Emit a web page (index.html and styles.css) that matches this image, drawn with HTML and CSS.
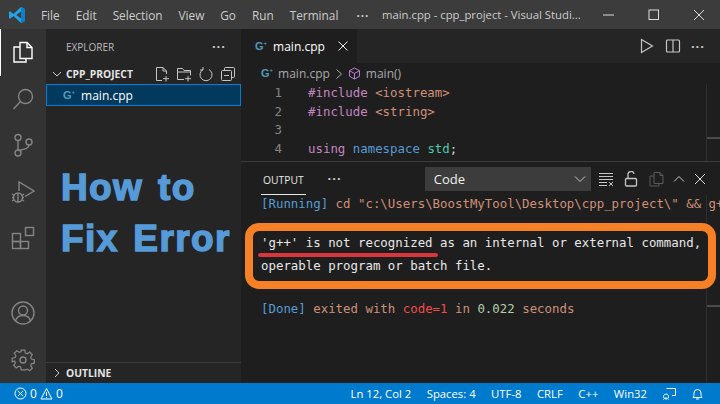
FILE: index.html
```html
<!DOCTYPE html>
<html lang="en">
<head>
    <meta charset="UTF-8">
    <meta name="viewport" content="width=device-width, initial-scale=1.0">
    <title>main.cpp - cpp_project - Visual Studio Code</title>
    <link rel="stylesheet" href="styles.css">
</head>
<body>
    <div class="window">
        <header class="titlebar">
            <svg class="logo" width="18" height="18" viewBox="0 0 18 18">
                <path d="M13 1l4 2v12l-4 2L5.500 10 2 12.800 1 12V6l1-.800L5.500 8z" fill="#23a3e8"/>
                <path d="M13 1l4 2v12l-4 2z" fill="#0e7fc8"/>
                <path d="M13 5.500L8.200 9 13 12.500z" fill="#3c3c3c"/>
            </svg>
            <nav class="menu">
                <span>File</span><span>Edit</span><span>Selection</span><span>View</span><span>Go</span><span>Run</span><span>Terminal</span><span class="menu-more">···</span>
            </nav>
            <div class="window-title">main.cpp - cpp_project - Visual Studi...</div>
            <div class="window-controls">
                <svg width="12" height="12" viewBox="0 0 12 12"><path d="M0 6h11" stroke="#ddd" fill="none"/></svg>
                <svg width="12" height="12" viewBox="0 0 12 12"><rect x="1" y="1" width="9.500" height="9.500" stroke="#ddd" fill="none"/></svg>
                <svg width="12" height="12" viewBox="0 0 12 12"><path d="M1 1l10 10M11 1L1 11" stroke="#ddd" fill="none"/></svg>
            </div>
        </header>

        <div class="workbench">
            <aside class="activitybar">
                <div class="activity-top">
                    <div class="activity-item active">
                        <svg width="24" height="24" viewBox="0 0 24 24" fill="none" stroke="#fff" stroke-width="1.400"><path d="M9 2.500h7l5 5v11H9z"/><path d="M16 2.500v5h5"/><path d="M9 7H3v15h12v-3.500"/></svg>
                    </div>
                    <div class="activity-item">
                        <svg width="24" height="24" viewBox="0 0 24 24" fill="none" stroke="#858585" stroke-width="1.400"><circle cx="14.500" cy="9.500" r="7"/><path d="M9.500 14.500L2.500 22"/></svg>
                    </div>
                    <div class="activity-item">
                        <svg width="24" height="24" viewBox="0 0 24 24" fill="none" stroke="#858585" stroke-width="1.400"><circle cx="7" cy="4.500" r="3"/><circle cx="7" cy="20" r="3"/><circle cx="18" cy="9" r="3"/><path d="M7 7.500V17M18 12c0 3-3 4-11 5.500"/></svg>
                    </div>
                    <div class="activity-item">
                        <svg width="24" height="24" viewBox="0 0 24 24" fill="none" stroke="#858585" stroke-width="1.400"><path d="M8 11V2l15 9-9 5.500"/><circle cx="7" cy="17.500" r="4.500"/><path d="M7 13v9M1 14l2.500 1.500M1 21l2.500-1.500M13 14l-2.500 1.500M13 21l-2.500-1.500M1 17.500h2M11 17.500h2"/></svg>
                    </div>
                    <div class="activity-item">
                        <svg width="24" height="24" viewBox="0 0 24 24" fill="none" stroke="#858585" stroke-width="1.400"><rect x="1.500" y="7.500" width="8" height="8"/><rect x="1.500" y="15.500" width="8" height="7"/><rect x="9.500" y="15.500" width="8" height="7"/><rect x="14.500" y="1.500" width="8" height="8"/></svg>
                    </div>
                </div>
                <div class="activity-bottom">
                    <div class="activity-item">
                        <svg width="24" height="24" viewBox="0 0 24 24" fill="none" stroke="#858585" stroke-width="1.400"><circle cx="12" cy="12" r="11"/><circle cx="12" cy="9.500" r="4.500"/><path d="M4.500 20c1-4 4-5.500 7.500-5.500s6.500 1.500 7.500 5.500"/></svg>
                    </div>
                    <div class="activity-item">
                        <svg width="24" height="24" viewBox="0 0 24 24" fill="none" stroke="#858585" stroke-width="1.400"><circle cx="12" cy="12" r="3"/><path d="M10 1h4l.700 3.300 2 .800 2.800-1.800 2.800 2.800-1.800 2.800.800 2 3.300.700v4l-3.300.700-.800 2 1.800 2.800-2.800 2.800-2.800-1.800-2 .800L14 23h-4l-.700-3.300-2-.800-2.800 1.800-2.800-2.800 1.800-2.800-.800-2L0 14v-4l3.300-.700.800-2-1.800-2.800 2.800-2.800 2.800 1.800 2-.800z" transform="translate(1.200 1.200) scale(.9)"/></svg>
                    </div>
                </div>
            </aside>

            <aside class="sidebar">
                <div class="sidebar-title">
                    <span>EXPLORER</span>
                    <span class="dots">···</span>
                </div>
                <div class="section-head">
                    <svg width="10" height="10" viewBox="0 0 10 10"><path d="M1 3l4 4 4-4" stroke="#ccc" fill="none"/></svg>
                    <span class="section-name">CPP_PROJECT</span>
                    <div class="section-actions">
                        <svg width="16" height="16" viewBox="0 0 16 16" fill="none" stroke="#c5c5c5"><path d="M8 14.500H2.500v-13H9l3.500 3.500v3M9 1.500V5h3.500M12 10v5.500M9 12.700h6"/></svg>
                        <svg width="16" height="16" viewBox="0 0 16 16" fill="none" stroke="#c5c5c5"><path d="M8 13.500H1.500v-11h5l1.500 2h6.500v5M1.500 6h13M12 10v5.500M9 12.700h6"/></svg>
                        <svg width="16" height="16" viewBox="0 0 16 16" fill="none" stroke="#c5c5c5"><path d="M5 3.500a6 6 0 1 0 6 0M5 1v3H2"/></svg>
                        <svg width="16" height="16" viewBox="0 0 16 16" fill="none" stroke="#c5c5c5"><rect x="1.500" y="4.500" width="10" height="10" rx="1"/><path d="M4.500 4.500v-2a1 1 0 0 1 1-1h8a1 1 0 0 1 1 1v8a1 1 0 0 1-1 1h-2M4 9.500h5"/></svg>
                    </div>
                </div>
                <div class="file-row">
                    <span class="cpp-icon">G<sup>+</sup></span>
                    <span>main.cpp</span>
                </div>
                <div class="thumb-text">How to<br>Fix Error</div>
                <div class="outline-head">
                    <svg width="10" height="10" viewBox="0 0 10 10"><path d="M3 1l4 4-4 4" stroke="#ccc" fill="none"/></svg>
                    <span class="section-name">OUTLINE</span>
                </div>
            </aside>

            <main class="main">
                <div class="tabbar">
                    <div class="tab">
                        <span class="cpp-icon">G<sup>+</sup></span>
                        <span class="tab-name">main.cpp</span>
                        <svg width="10" height="10" viewBox="0 0 10 10"><path d="M.5.500l9 9M9.500.500l-9 9" stroke="#eee" fill="none"/></svg>
                    </div>
                    <div class="tab-actions">
                        <svg width="16" height="16" viewBox="0 0 16 16" fill="none" stroke="#c5c5c5" stroke-width="1.200"><path d="M2.500 1.500l11 6.500-11 6.500z"/></svg>
                        <svg width="16" height="16" viewBox="0 0 16 16" fill="none" stroke="#c5c5c5" stroke-width="1.200"><rect x="1.500" y="2" width="13" height="12" rx="1"/><path d="M8 2v12"/></svg>
                        <span class="dots">···</span>
                    </div>
                </div>
                <div class="breadcrumbs">
                    <span class="cpp-icon">G<sup>+</sup></span>
                    <span>main.cpp</span>
                    <svg width="8" height="10" viewBox="0 0 8 10"><path d="M1.500 .5l5 4.500-5 4.500" stroke="#aaa" fill="none"/></svg>
                    <svg width="13" height="13" viewBox="0 0 13 13" fill="none" stroke="#b180d7"><path d="M6.500 1l5 2.700v5.600l-5 2.700-5-2.700V3.700zM1.500 3.700l5 2.800 5-2.800M6.500 6.500V12"/></svg>
                    <span>main()</span>
                </div>
                <div class="editor">
                    <div class="code">
                        <div class="code-line"><span class="line-no">1</span><span><span class="kw-pink">#include</span> <span class="str">&lt;iostream&gt;</span></span></div>
                        <div class="code-line"><span class="line-no">2</span><span><span class="kw-pink">#include</span> <span class="str">&lt;string&gt;</span></span></div>
                        <div class="code-line"><span class="line-no">3</span></div>
                        <div class="code-line"><span class="line-no">4</span><span><span class="kw-pink">using</span> <span class="kw-blue">namespace</span> <span class="ns">std</span>;</span></div>
                    </div>
                    <div class="ruler ruler-editor"><div class="ruler-mark"></div></div>
                </div>
                <section class="panel">
                    <div class="panel-head">
                        <span class="panel-tab">OUTPUT</span>
                        <span class="dots">···</span>
                        <div class="channel">
                            <span>Code</span>
                            <svg width="12" height="12" viewBox="0 0 12 12"><path d="M1 3.500l5 5 5-5" stroke="#ccc" fill="none"/></svg>
                        </div>
                        <div class="panel-actions">
                            <svg width="16" height="16" viewBox="0 0 16 16" fill="none" stroke="#c5c5c5"><path d="M1 2.500h14M1 5.500h14M1 8.500h14M1 11.500h8M1 14.500h8M11 11l4 4M15 11l-4 4"/></svg>
                            <svg width="16" height="16" viewBox="0 0 16 16" fill="none" stroke="#c5c5c5" stroke-width="1.300"><rect x="2.500" y="7.500" width="11" height="7.500" rx="1"/><path d="M5 7.500V4a3 3 0 0 1 6-1"/></svg>
                            <svg width="16" height="16" viewBox="0 0 16 16" fill="none" stroke="#5a5a5a"><path d="M6 1.500h6l3 3v8H6zM12 1.500v3h3M6 5H2v10h9v-2.500"/></svg>
                            <svg width="12" height="12" viewBox="0 0 12 12"><path d="M1 8.500l5-5 5 5" stroke="#ccc" fill="none"/></svg>
                            <svg width="12" height="12" viewBox="0 0 12 12"><path d="M1 1l10 10M11 1L1 11" stroke="#ddd" fill="none"/></svg>
                        </div>
                    </div>
                    <div class="output">
                        <div class="ruler ruler-output"><div class="ruler-mark"></div></div>
                        <div class="out-line"><span class="log-tag">[Running]</span> <span class="log-cmd">cd "c:\Users\BoostMyTool\Desktop\cpp_project\" &amp;&amp; g+</span></div>
                        <div class="error-box">
                            <div class="out-line err-first">'g++' is not recognized as an internal or external command,</div>
                            <div class="out-line">operable program or batch file.</div>
                        </div>
                        <div class="out-line"><span class="log-tag">[Done]</span> <span class="log-cmd">exited with</span> <span class="log-code">code=1</span> <span class="log-cmd">in</span> <span class="log-num">0.022</span> <span class="log-cmd">seconds</span></div>
                    </div>
                </section>
            </main>
        </div>

        <footer class="statusbar">
            <div class="status-left">
                <svg width="13" height="13" viewBox="0 0 13 13" fill="none" stroke="#fff"><circle cx="6.500" cy="6.500" r="5.500"/><path d="M4 4l5 5M9 4l-5 5"/></svg>
                <span>0</span>
                <svg width="13" height="13" viewBox="0 0 13 13" fill="none" stroke="#fff"><path d="M6.500 1.500l5.500 10.500H1zM6.500 5v4M6.500 10v1"/></svg>
                <span>0</span>
            </div>
            <div class="status-right">
                <span>Ln 12, Col 2</span>
                <span>Spaces: 4</span>
                <span>UTF-8</span>
                <span>CRLF</span>
                <span>C++</span>
                <span>Win32</span>
                <svg width="13" height="13" viewBox="0 0 13 13" fill="none" stroke="#fff"><path d="M3.500 1.500h9v7H9M3 7a2.500 2.500 0 1 0 .1 0zM.5 12.500c.5-2 4.500-2 5 0"/></svg>
                <svg width="13" height="13" viewBox="0 0 13 13" fill="none" stroke="#fff"><path d="M2 10.500c1-1 1-2 1-4.500a3.500 3.500 0 0 1 7 0c0 2.500 0 3.500 1 4.500zM5 12h3"/></svg>
            </div>
        </footer>
    </div>
</body>
</html>
```

FILE: styles.css
```css
* {
    box-sizing: border-box;
}
html, body {
    margin: 0;
    padding: 0;
    background: #1e1e1e;
}
.window {
    width: 720px;
    height: 404px;
    display: flex;
    flex-direction: column;
    overflow: hidden;
    font-family: "Open Sans", "Noto Sans", sans-serif;
    color: #ccc;
}
svg {
    flex: none;
    display: block;
}
.dots {
    font-size: 13px;
    font-weight: bold;
    letter-spacing: 1px;
    line-height: 1;
    color: #ccc;
}

/* title bar */
.titlebar {
    height: 29px;
    flex: none;
    background: #3c3c3c;
    display: flex;
    align-items: center;
    padding-left: 8px;
    font-size: 11.800px;
}
.menu {
    display: flex;
    gap: 16px;
    margin-left: 15px;
    width: 341px;
}
.menu-more {
    margin-left: 2px;
    font-weight: bold;
    letter-spacing: 1px;
}
.window-title {
    width: 204px;
    font-size: 11.300px;
    white-space: nowrap;
}
.window-controls {
    margin-left: 17px;
    display: flex;
    gap: 33px;
}

/* left side */
.workbench {
    flex: 1;
    display: flex;
    min-height: 0;
}
.activitybar {
    width: 46px;
    flex: none;
    background: #333;
    display: flex;
    flex-direction: column;
    justify-content: space-between;
}
.activity-item {
    height: 46.500px;
    display: flex;
    align-items: center;
    justify-content: center;
    padding-right: 1px;
}
.activity-item.active {
    border-left: 1px solid #fff;
}
.sidebar {
    width: 195px;
    flex: none;
    background: #252526;
    display: flex;
    flex-direction: column;
}
.sidebar-title {
    height: 35px;
    display: flex;
    align-items: center;
    justify-content: space-between;
    padding: 0 15px 0 20px;
    font-size: 10px;
    color: #bbb;
}
.section-head {
    height: 20px;
    display: flex;
    align-items: center;
    padding-left: 6px;
}
.section-name {
    margin-left: 4px;
    font-size: 10.300px;
    font-weight: bold;
    color: #e4e4e4;
}
.section-actions {
    margin-left: auto;
    padding-right: 5px;
    display: flex;
    gap: 6px;
}
.file-row {
    height: 22px;
    display: flex;
    align-items: center;
    gap: 6px;
    padding-left: 16px;
    background: #04395e;
    border: 1px solid #007fd4;
    font-size: 12px;
    color: #fff;
}
.cpp-icon {
    font-family: "Liberation Sans", sans-serif;
    font-size: 11px;
    font-weight: bold;
    line-height: 1;
    color: #519aba;
}
.cpp-icon sup {
    font-size: 6px;
    line-height: 0;
}
.thumb-text {
    flex: 1;
    padding: 56px 0 0 15px;
    font-family: "Liberation Sans", sans-serif;
    font-size: 37px;
    font-weight: bold;
    line-height: 51px;
    letter-spacing: 1.400px;
    word-spacing: 3px;
    color: #569ad8;
    -webkit-text-stroke: 1.400px #569ad8;
    white-space: nowrap;
}
.outline-head {
    height: 21px;
    flex: none;
    display: flex;
    align-items: center;
    padding-left: 6px;
    border-top: 1px solid #3c3c3c;
}

/* editor */
.main {
    flex: 1;
    min-width: 0;
    display: flex;
    flex-direction: column;
    background: #1e1e1e;
}
.tabbar {
    height: 34px;
    flex: none;
    display: flex;
    justify-content: space-between;
    background: #252526;
}
.tab {
    width: 116px;
    display: flex;
    align-items: center;
    gap: 6px;
    padding-left: 14px;
    background: #1e1e1e;
}
.tab-name {
    width: 59px;
    font-size: 12px;
    color: #fff;
}
.tab-actions {
    display: flex;
    align-items: center;
    gap: 10px;
    padding-right: 15px;
}
.breadcrumbs {
    height: 21px;
    flex: none;
    display: flex;
    align-items: center;
    gap: 5px;
    padding-left: 20px;
    font-size: 12px;
    color: #aaa;
}
.editor {
    height: 78px;
    flex: none;
    display: flex;
    overflow: hidden;
    border-bottom: 1px solid #3c3c3c;
    font-family: "DejaVu Sans Mono", "Liberation Mono", monospace;
    font-size: 12.400px;
    line-height: 18.600px;
    color: #d4d4d4;
}
.code {
    flex: 1;
}
.code-line {
    display: flex;
    white-space: pre;
}
.line-no {
    width: 41px;
    margin-right: 26px;
    text-align: right;
    color: #858585;
}
.kw-pink {
    color: #c586c0;
}
.kw-blue {
    color: #569cd6;
}
.ns {
    color: #4ec9b0;
}
.str {
    color: #ce9178;
}
.ruler {
    width: 14px;
    border-left: 1px solid #2e2e2e;
}
.ruler-mark {
    height: 2px;
    background: #4a4a4a;
}
.ruler-editor .ruler-mark {
    margin-top: 53px;
}

/* output panel */
.panel {
    flex: 1;
    min-height: 0;
    display: flex;
    flex-direction: column;
}
.panel-head {
    height: 33px;
    flex: none;
    display: flex;
    align-items: center;
    padding-left: 20px;
}
.panel-tab {
    height: 33px;
    padding: 11px 2px 0 2px;
    border-bottom: 1px solid #e7e7e7;
    font-size: 10.300px;
    color: #e7e7e7;
}
.panel-head .dots {
    margin-left: 22px;
}
.channel {
    width: 166px;
    height: 24px;
    margin-left: 83px;
    padding: 0 5px 0 9px;
    display: flex;
    align-items: center;
    justify-content: space-between;
    background: #3c3c3c;
    font-size: 13px;
    color: #f0f0f0;
}
.panel-actions {
    margin-left: 7px;
    display: flex;
    align-items: center;
    gap: 9px;
}
.output {
    flex: 1;
    position: relative;
    overflow: hidden;
    font-family: "DejaVu Sans Mono", "Liberation Mono", monospace;
    font-size: 12.400px;
    line-height: 18px;
}
.ruler-output {
    position: absolute;
    top: 0;
    right: 0;
    bottom: 0;
}
.ruler-output .ruler-mark {
    margin-top: 110px;
}
.out-line {
    position: relative;
    padding-left: 20px;
    white-space: pre;
}
.log-tag {
    color: #569cd6;
}
.log-cmd {
    color: #ce9178;
}
.log-code {
    color: #f14c4c;
}
.log-num {
    color: #b5cea8;
}
.error-box {
    position: relative;
    width: 471px;
    height: 66px;
    margin: 10px 0 11px 4px;
    padding-top: 1px;
    border: 8px solid #f58025;
    border-radius: 14px;
    line-height: 22.500px;
    color: #e8e8e8;
    background: #1e1e1e;
}
.error-box .out-line {
    padding-left: 8px;
}
.err-first::after {
    content: "";
    position: absolute;
    left: 5px;
    top: 21px;
    width: 180px;
    height: 4px;
    border-radius: 2px;
    background: #d9363e;
}

/* status bar */
.statusbar {
    height: 21px;
    flex: none;
    display: flex;
    align-items: center;
    justify-content: space-between;
    padding: 0 16px 0 14px;
    background: #007acc;
    font-size: 11.300px;
    color: #fff;
}
.status-left, .status-right {
    display: flex;
    align-items: center;
}
.status-left {
    gap: 3px;
    font-size: 12px;
}
.status-right {
    gap: 15.500px;
}
```
